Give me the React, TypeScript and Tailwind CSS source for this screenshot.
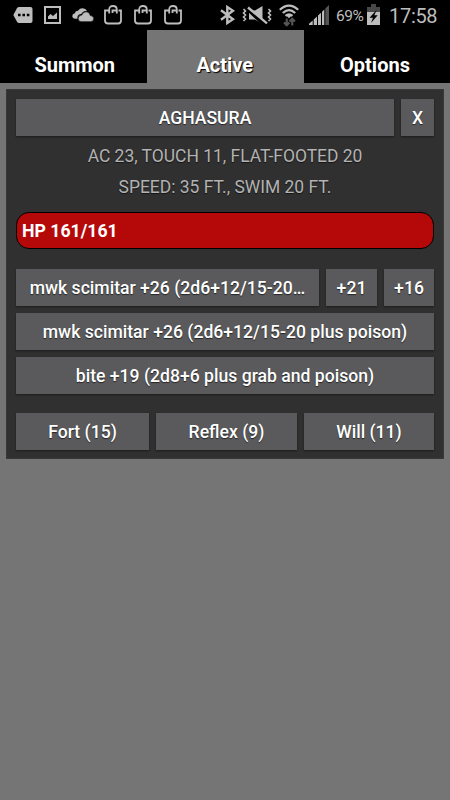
import React, { useState } from "react";

const TABS = ["Summon", "Active", "Options"];

function Button({
  children,
  className = "",
}: {
  children: React.ReactNode;
  className?: string;
}) {
  return (
    <button
      type="button"
      className={`h-[37px] bg-[#5a5a5c] text-center text-[17.6px] leading-[38px] font-medium text-white whitespace-nowrap shadow-[0_1px_2px_rgba(0,0,0,0.45)] [text-shadow:0_1px_1px_rgba(0,0,0,0.6)] ${className}`}
    >
      {children}
    </button>
  );
}

function BagIcon() {
  return (
    <svg width="18" height="20" viewBox="0 0 18 20" fill="none" stroke="#bdbdbd" strokeWidth="1.8">
      <path d="M5 5.5H1V15.5Q1 18.5 4 18.5H14Q17 18.5 17 15.5V5.5H14.5" />
      <path d="M5.2 8.5V4.5Q5.2 1 9 1Q12.8 1 12.8 4.5V8.5M8.5 8V5.5H12.8" />
    </svg>
  );
}

function StatusBar() {
  return (
    <div className="flex h-[30px] items-center bg-black pl-[13px] text-[#bdbdbd]">
      <svg width="20" height="16" viewBox="0 0 20 16">
        <path d="M6 0H17.5Q19.5 0 19.5 2V14Q19.5 16 17.5 16H6Q4.8 16 4 14.7L.3 8L4 1.3Q4.8 0 6 0Z" fill="#bdbdbd" />
        <path d="M5 6.7h2.6v2.6H5zM9.4 6.7H12v2.6H9.4zM13.8 6.7h2.6v2.6h-2.6z" fill="#000" />
      </svg>
      <svg className="ml-[11px]" width="17" height="18" viewBox="0 0 17 18">
        <path d="M1 1H16V17H1Z" fill="none" stroke="#bdbdbd" strokeWidth="2" />
        <path d="M4 13V10.5L6.5 8L9 10L13 6.5V13Z" fill="#bdbdbd" />
      </svg>
      <svg className="ml-[11px]" width="22" height="14" viewBox="0 0 22 14">
        <path d="M3.5 10.7Q.3 10.5.3 8Q.3 5.7 2.8 5.2Q3.2 2.5 6 2.7Q7.7.3 10.6.3Q13.7.3 15 3Q11 2.5 9.3 6Q5.7 6.2 5.4 9.5Q5.4 10.2 5.6 10.7Z" fill="#bdbdbd" />
        <path d="M9.3 13.7Q6.2 13.5 6.2 10.7Q6.2 7.4 9.8 7.1Q11 3.8 14.2 3.8Q17.6 3.8 18.2 7.5Q21.7 7.7 21.7 10.7Q21.7 13.5 18.7 13.7Z" fill="#bdbdbd" stroke="#000" strokeWidth=".6" />
      </svg>
      <div className="mb-px ml-[10px] flex gap-3">
        <BagIcon />
        <BagIcon />
        <BagIcon />
      </div>
      <svg className="ml-[38px]" width="15" height="20" viewBox="0 0 15 20" fill="none" stroke="#bdbdbd" strokeWidth="2.4">
        <path d="M1 5.3L13 14.2L7.3 18V2L13 5.8L1 14.7" />
      </svg>
      <svg className="ml-[7px]" width="30" height="18" viewBox="0 0 30 18">
        <path d="M7 4.5H13L20.5 0V18L13 13.5H7Z" fill="#bdbdbd" />
        <path d="M5 2.5L22 18.5" stroke="#000" strokeWidth="3.6" />
        <path d="M6 1.5L25 17.3" stroke="#bdbdbd" strokeWidth="2.4" />
        <path d="M1.5 3L3.5 5L1.5 7L3.5 9L1.5 11L3.5 13L1.5 15M26.5 3L28.5 5L26.5 7L28.5 9L26.5 11L28.5 13L26.5 15" fill="none" stroke="#bdbdbd" strokeWidth="1.6" />
      </svg>
      <svg className="mt-px ml-[7px]" width="20" height="23" viewBox="0 0 20 23" fill="none">
        <path d="M.8 5.8Q10-2.5 19.2 5.8M3.8 9Q10 3.3 16.2 9M6.5 11.9Q10 8.8 13.5 11.9" stroke="#bdbdbd" strokeWidth="2.2" />
        <path d="M7.2 11.5Q10 9.5 12.8 11.5L10 14.2Z" fill="#bdbdbd" />
        <path d="M7.7 14.5V21M5 18.5L7.7 21.2L10.4 18.5M13.2 21.5V15M10.5 17.5L13.2 14.8L15.9 17.5" stroke="#555" strokeWidth="2.1" />
      </svg>
      <svg className="ml-[10px]" width="21" height="20" viewBox="0 0 21 20">
        <path d="M0 20V18.7L3.7 15.5V20ZM4.7 20V14.5L8 11.5V20ZM9 20V10.5L12 7.7V20ZM13 20V6.7L15.3 4.5V20Z" fill="#bdbdbd" />
        <path d="M16.3 20V3.5L20 0V20Z" fill="#555" />
      </svg>
      <span className="ml-[6px] w-[28px] pt-px text-[15.5px] leading-[30px] tracking-[-0.4px]">69%</span>
      <svg className="ml-[3px]" width="13" height="22" viewBox="0 0 13 22">
        <path d="M4 0H9V3H13V8H0V3H4Z" fill="#484848" />
        <path d="M0 8H13V21H0Z" fill="#bdbdbd" />
        <path d="M9.8 5.8L2.5 13.7H6L4 19L10.7 11.3H7.3Z" fill="#000" />
      </svg>
      <span className="ml-[9px] pt-px text-[20px] leading-[32px] tracking-[-0.3px]">17:58</span>
    </div>
  );
}

export default function App() {
  const [tab, setTab] = useState("Active");

  return (
    <div className="h-[800px] w-[450px] overflow-hidden bg-[#757575] font-['Roboto',sans-serif]">
      <StatusBar />
      <nav className="grid h-[53px] grid-cols-[146.5px_157.5px_146px] bg-black">
        {TABS.map((name) => (
          <button
            key={name}
            type="button"
            onClick={() => setTab(name)}
            className={`pt-[17px] text-[20px] leading-[36px] font-bold text-white [text-shadow:1px_1px_1px_#000] ${
              name === tab ? "bg-[#757575]" : ""
            } ${name === "Summon" ? "pl-[3px]" : ""} ${name === "Active" ? "pr-px" : ""} ${
              name === "Options" ? "pr-1" : ""
            }`}
          >
            {name}
          </button>
        ))}
      </nav>

      <main className="mt-[6px] mr-[6px] ml-[6px] h-[370px] border border-[#383838] bg-[#303030] px-[9px] pt-[9px]">
        <div className="flex gap-[7px]">
          <Button className="flex-1">AGHASURA</Button>
          <Button className="w-[33px]">X</Button>
        </div>

        <div className="mt-[5px] text-center text-[17.45px] leading-[31px] text-[#b3b3b3] [text-shadow:0_1px_1px_rgba(0,0,0,0.6)]">
          <p>AC 23, TOUCH 11, FLAT-FOOTED 20</p>
          <p>SPEED: 35 FT., SWIM 20 FT.</p>
        </div>

        <div className="mt-[9px] h-[37px] rounded-[13px] border border-black bg-[#b50808] pl-[5px] text-[17.7px] leading-[37px] font-bold text-white">
          HP 161/161
        </div>

        <div className="mt-5 flex flex-col gap-[7px]">
          <div className="flex gap-[7px]">
            <Button className="min-w-0 flex-1">mwk scimitar +26 (2d6+12/15-20…</Button>
            <Button className="w-[51px]">+21</Button>
            <Button className="w-[50px]">+16</Button>
          </div>
          <Button>mwk scimitar +26 (2d6+12/15-20 plus poison)</Button>
          <Button>bite +19 (2d8+6 plus grab and poison)</Button>
        </div>

        <div className="mt-[19px] flex gap-[7px]">
          <Button className="w-[133px]">Fort (15)</Button>
          <Button className="w-[141px]">Reflex (9)</Button>
          <Button className="w-[130px]">Will (11)</Button>
        </div>
      </main>
    </div>
  );
}
